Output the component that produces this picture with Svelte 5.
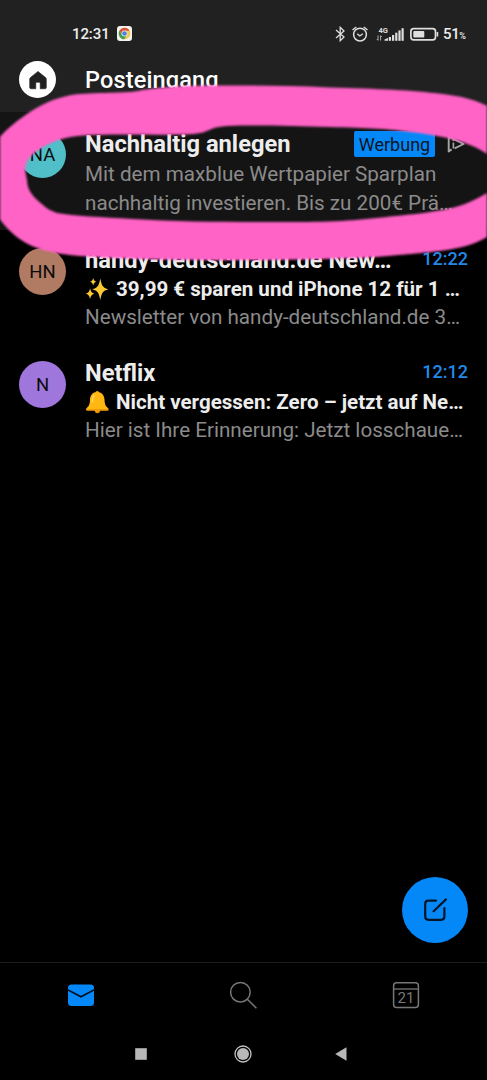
<script>
  let time = "12:31";
  let battery = 51;
  let mails = [
    {
      initials: "HN",
      color: "#b07a63",
      sender: "handy-deutschland.de New…",
      time: "12:22",
      icon: "sparkles",
      subject: "39,99 € sparen und iPhone 12 für 1 …",
      preview: "Newsletter von handy-deutschland.de 3…",
    },
    {
      initials: "N",
      color: "#9f76dc",
      sender: "Netflix",
      time: "12:12",
      icon: "bell",
      subject: "Nicht vergessen: Zero – jetzt auf Ne…",
      preview: "Hier ist Ihre Erinnerung: Jetzt losschaue…",
    },
  ];
</script>

<div class="screen">
  <header>
    <div class="status">
      <span class="clock">{time}</span>
      <svg class="chrome" width="15" height="15" viewBox="0 0 15 15">
        <rect width="15" height="15" rx="3" fill="#f4f2ec" />
        <circle cx="7.5" cy="7.5" r="5.8" fill="#f2c94b" />
        <path d="M2.5 4.6A5.8 5.8 0 0 1 12.6 4.7L7.5 4.8L5.2 8.8Z" fill="#d9503f" />
        <path d="M2.5 4.6A5.8 5.8 0 0 0 7.2 13.3L9.6 9.3L5 8.9Z" fill="#3f9d58" />
        <circle cx="7.5" cy="7.5" r="2.9" fill="#f4f2ec" />
        <circle cx="7.5" cy="7.5" r="2.3" fill="#4a80e0" />
      </svg>
      <svg class="signals" width="104" height="18" viewBox="0 0 104 18">
        <g fill="none" stroke="#dedede" stroke-width="1.3">
          <path d="M1 5L9 12L5.2 15.8V2.2L9 6L1 13" />
          <circle cx="25" cy="9.6" r="6.4" stroke-width="1.5" />
          <path d="M17.5 5L21.3 2M28.7 2L32.5 5" stroke-width="1.5" />
          <path d="M22.3 8.8L24.8 11L27.9 8.8" />
          <rect x="75.9" y="3.6" width="24.6" height="11.2" rx="2.8" stroke-width="1.7" />
        </g>
        <g fill="#dedede">
          <rect x="78.3" y="5.9" width="11" height="6.6" rx="1" />
          <rect x="101.6" y="7" width="1.6" height="4.5" />
          <path d="M49.5 15.8V14.6L53 13V15.8Z" />
          <rect x="53.8" y="12" width="2.2" height="3.8" />
          <rect x="57" y="10" width="2.2" height="5.8" />
          <rect x="60.2" y="7.7" width="2.2" height="8.1" />
          <rect x="63.4" y="5.4" width="2.2" height="10.4" />
          <rect x="66.5" y="3.2" width="2.2" height="12.6" />
        </g>
        <path d="M43 10.5V15.3L41.8 14M45.6 15.5V10.7L46.8 12" fill="none" stroke="#bbb" stroke-width=".9" />
        <text x="43.5" y="7.8" class="net">4G</text>
      </svg>
      <span class="battery">{battery}<small>%</small></span>
    </div>
    <div class="title">
      <div class="home">
        <svg width="20" height="20" viewBox="0 0 20 20">
          <path d="M10 1.4L17.6 7.6Q18.3 8.2 18.3 9V17.4Q18.3 18.8 16.9 18.8H12.2V13.2Q12.2 12.3 11.3 12.3H8.7Q7.8 12.3 7.8 13.2V18.8H3.1Q1.7 18.8 1.7 17.4V9Q1.7 8.2 2.4 7.6Z" fill="#212121" stroke="#212121" stroke-width=".6" stroke-linejoin="round" />
        </svg>
      </div>
      <h1>Posteingang</h1>
    </div>
  </header>

  <article class="mail ad">
    <div class="avatar" style="background-color: #50bfc8">NA</div>
    <div class="body">
      <div class="top">
        <span class="sender">Nachhaltig anlegen</span>
        <span class="label">Werbung</span>
        <svg class="choices" width="18" height="18" viewBox="0 0 18 18">
          <path d="M4.6 14.4L1.7 16.4V1.6L16.6 9L7.6 13.4" fill="none" stroke="#a5a5a5" stroke-width="1.9" stroke-linejoin="round" />
          <path d="M6.4 7.4V13.4M6.4 4.8V6" stroke="#a5a5a5" stroke-width="1.6" />
        </svg>
      </div>
      <p class="preview">Mit dem maxblue Wertpapier Sparplan</p>
      <p class="preview">nachhaltig investieren. Bis zu 200€ Prä…</p>
    </div>
  </article>

  {#each mails as mail}
    <article class="mail">
      <div class="avatar" style="background-color: {mail.color}">{mail.initials}</div>
      <div class="body">
        <div class="top">
          <span class="sender">{mail.sender}</span>
          <time>{mail.time}</time>
        </div>
        <p class="subject">
          {#if mail.icon == "sparkles"}
            <svg width="24" height="24" viewBox="0 0 24 24" fill="#fcc934">
              <path d="M15.3 1.5C16.8 9 17.6 10.6 23.4 12.3C17.6 14 16.8 15.6 15.3 23C13.8 15.6 13 14 7.2 12.3C13 10.6 13.8 9 15.3 1.5Z" />
              <path d="M8.2 1C8.9 3.6 9.3 4.1 11.4 4.8C9.3 5.5 8.9 6 8.2 8.6C7.5 6 7.1 5.5 5 4.8C7.1 4.1 7.5 3.6 8.2 1Z" />
              <path d="M5.1 11.3C6 15 6.6 15.8 9.4 16.7C6.6 17.6 6 18.4 5.1 22C4.2 18.4 3.6 17.6 .8 16.7C3.6 15.8 4.2 15 5.1 11.3Z" />
            </svg>
          {:else}
            <svg width="24" height="24" viewBox="0 0 24 24">
              <circle cx="12.4" cy="20.6" r="2.6" fill="#e59600" />
              <circle cx="12.2" cy="2.8" r="1.8" fill="#ffb300" />
              <path d="M12.2 2C7.5 2 5.2 5.5 5 9.5C4.8 14 4.1 16 2.2 17.4Q1 18.3 1 19.6Q1 20.6 2.2 20.6H22.4Q23.6 20.6 23.6 19.6Q23.6 18.3 22.4 17.4C20.5 16 19.7 14 19.5 9.5C19.2 5.5 16.9 2 12.2 2Z" fill="#ffb711" />
              <path d="M1.3 18.9H23.3Q23.6 20.6 22.4 20.6H2.2Q1 20.6 1.3 18.9Z" fill="#f19a0b" />
              <path d="M9.2 5.6Q7.4 7.5 7.2 12" fill="none" stroke="#ffd95c" stroke-width="1.6" stroke-linecap="round" />
            </svg>
          {/if}
          <span>{mail.subject}</span>
        </p>
        <p class="preview">{mail.preview}</p>
      </div>
    </article>
  {/each}

  <div class="space">
    <button class="compose" aria-label="Neue E-Mail">
      <svg width="26" height="26" viewBox="0 0 26 26" fill="none" stroke="#06162a" stroke-width="2.2" stroke-linecap="round">
        <path d="M14 3.6H6.4Q3.2 3.6 3.2 6.8V19.6Q3.2 22.8 6.4 22.8H19.2Q22.4 22.8 22.4 19.6V11" />
        <path d="M11.6 14.2L24 2.4" />
      </svg>
    </button>
  </div>

  <nav>
    <svg width="28" height="28" viewBox="0 0 28 28">
      <rect x="1" y="3.4" width="26" height="21.6" rx="3.5" fill="#0588f7" />
      <path d="M0 8.4L14 15.8L28 8.4" fill="none" stroke="#000d1c" stroke-width="1.7" />
    </svg>
    <svg width="28" height="28" viewBox="0 0 28 28" fill="none" stroke="#777" stroke-width="1.5">
      <circle cx="11.4" cy="11.2" r="9.8" />
      <path d="M18.3 18.2L27.4 27.2" />
    </svg>
    <svg width="28" height="28" viewBox="0 0 28 28">
      <rect x="1.6" y="1.7" width="24.8" height="24.8" rx="3" fill="none" stroke="#777" stroke-width="1.5" />
      <path d="M1.6 8H26.4" stroke="#777" stroke-width="1.3" />
      <text x="14" y="22.3" class="day">21</text>
    </svg>
  </nav>

  <footer>
    <svg width="18" height="18" viewBox="0 0 18 18"><rect x="3.2" y="3.2" width="11.6" height="11.6" fill="#b8b8b8" /></svg>
    <svg class="circle" width="18" height="18" viewBox="0 0 18 18">
      <circle cx="9" cy="9" r="8" fill="none" stroke="#c4c4c4" stroke-width="1.3" />
      <circle cx="9" cy="9" r="6" fill="#b8b8b8" />
    </svg>
    <svg width="18" height="18" viewBox="0 0 18 18"><path d="M3.2 9L14.5 2.3V15.7Z" fill="#b8b8b8" /></svg>
  </footer>

  <!-- pink marker ring round the ad -->
  <svg class="marker" width="487" height="200" viewBox="0 70 487 200">
    <path
      d="M500 114C486 103 468 97 443 94C410 90 380 89 330 87.500C300 86 270 85.500 243 85.500C200 85 165 86 143 90C134 92 128 92.500 100 93C84 93.500 75 94 67 96C48 100 35 108 20 119C8 128 2 134 -4 142V212C0 221 5 226 10 231C17 238 27 245 43 250C65 256 90 257 130 258.500C190 261 300 261 376 257C410 254 425 253 443 250.500C462 248 475 244 487 237L500 230V180C496 186 492 190 487 193C470 203 458 207 443 210C420 214 405 215 390 216.500C360 220 340 222 290 222C230 222 180 222 133 219C100 217 75 216 57 213C51 211 46 208 43 205C33 197 27 190 27 180C25 171 24 167 28 160C32 153 45 144 62 139C75 135 90 135 110 134.500C150 134 190 136 203 132.500C212 129 214 127 227 126C260 125 290 126 330 127C370 128 390 129 410 132C445 136 470 142 487 154C492 158 496 164 500 170Z"
      fill="#ff63c6"
    />
  </svg>
</div>

<style>
  :global(body) {
    background: #000;
  }
  .screen {
    position: relative;
    width: 487px;
    height: 1080px;
    display: flex;
    flex-direction: column;
    overflow: hidden;
    background: #000;
    color: #ededed;
    font-family: Roboto, sans-serif;
  }
  header {
    height: 112px;
    background: #212121;
  }
  .status {
    height: 56px;
    padding: 12px 20px 0 72px;
    box-sizing: border-box;
    display: flex;
    align-items: center;
  }
  .clock {
    width: 45px;
    font-size: 15px;
    font-weight: 500;
    letter-spacing: -0.1px;
  }
  .chrome {
    margin-bottom: 1px;
  }
  .signals {
    margin-left: auto;
    margin-right: 4px;
  }
  .net {
    font-size: 7.5px;
    font-weight: 700;
    fill: #dedede;
  }
  .battery {
    width: 24px;
    font-size: 15px;
    font-weight: 500;
    letter-spacing: -0.4px;
    white-space: nowrap;
  }
  .battery small {
    font-size: 9px;
  }
  .title {
    display: flex;
    align-items: center;
    padding-left: 19px;
    height: 47px;
  }
  .home {
    width: 37px;
    height: 37px;
    border-radius: 50%;
    background: #fff;
    display: flex;
    align-items: center;
    justify-content: center;
  }
  h1 {
    margin: 0 0 0 29px;
    font-size: 23.5px;
    font-weight: 500;
    letter-spacing: 0.15px;
    color: #fff;
  }
  .mail {
    display: flex;
    height: 113px;
    padding: 16px 19px 0;
    box-sizing: border-box;
  }
  .ad {
    height: 118px;
    padding-top: 18px;
    background: #141414;
  }
  .avatar {
    flex: none;
    width: 47px;
    height: 47px;
    margin: 2px 19px 0 0;
    border-radius: 50%;
    color: #0b0b0b;
    font-size: 18.5px;
    line-height: 48px;
    text-align: center;
  }
  .ad .avatar {
    margin-top: 1px;
  }
  .body {
    width: 383px;
  }
  .top {
    display: flex;
    align-items: center;
    height: 29px;
  }
  .sender {
    flex: 1;
    font-size: 23.7px;
    font-weight: 700;
    line-height: 29px;
    white-space: nowrap;
  }
  .label {
    width: 81px;
    height: 26px;
    margin: 0 12px 2px 0;
    border-radius: 2px;
    background: #0588f7;
    color: #0b1523;
    font-size: 18px;
    line-height: 27px;
    text-align: center;
  }
  .choices {
    margin: 0 3px 2px 0;
  }
  time {
    margin-bottom: 4px;
    color: #2389e8;
    font-size: 18px;
    font-weight: 500;
  }
  p {
    margin: 0;
    white-space: nowrap;
  }
  .subject {
    display: flex;
    align-items: center;
    gap: 7px;
    height: 28px;
    font-size: 20.55px;
    font-weight: 700;
  }
  .preview {
    font-size: 20.65px;
    line-height: 28px;
    color: #8b8b8b;
  }
  .ad .top {
    margin-bottom: 1px;
  }
  .ad .preview {
    line-height: 29px;
  }
  .space {
    flex: 1;
    display: flex;
    align-items: flex-end;
    justify-content: flex-end;
    padding: 0 19px 19px;
  }
  .compose {
    width: 66px;
    height: 66px;
    padding: 0;
    border: none;
    border-radius: 50%;
    background: #0588f7;
    display: flex;
    align-items: center;
    justify-content: center;
  }
  nav {
    display: flex;
    justify-content: space-around;
    align-items: center;
    height: 65px;
    padding-bottom: 1px;
    box-sizing: border-box;
    border-top: 1px solid #1c1c1c;
  }
  .day {
    font-size: 15px;
    text-anchor: middle;
    fill: #777;
  }
  footer {
    display: flex;
    justify-content: space-between;
    align-items: center;
    height: 53px;
    padding: 0 137px 0 132px;
  }
  .circle {
    margin-left: 4px;
  }
  .marker {
    position: absolute;
    left: 0;
    top: 70px;
    filter: blur(1.2px);
  }
</style>
